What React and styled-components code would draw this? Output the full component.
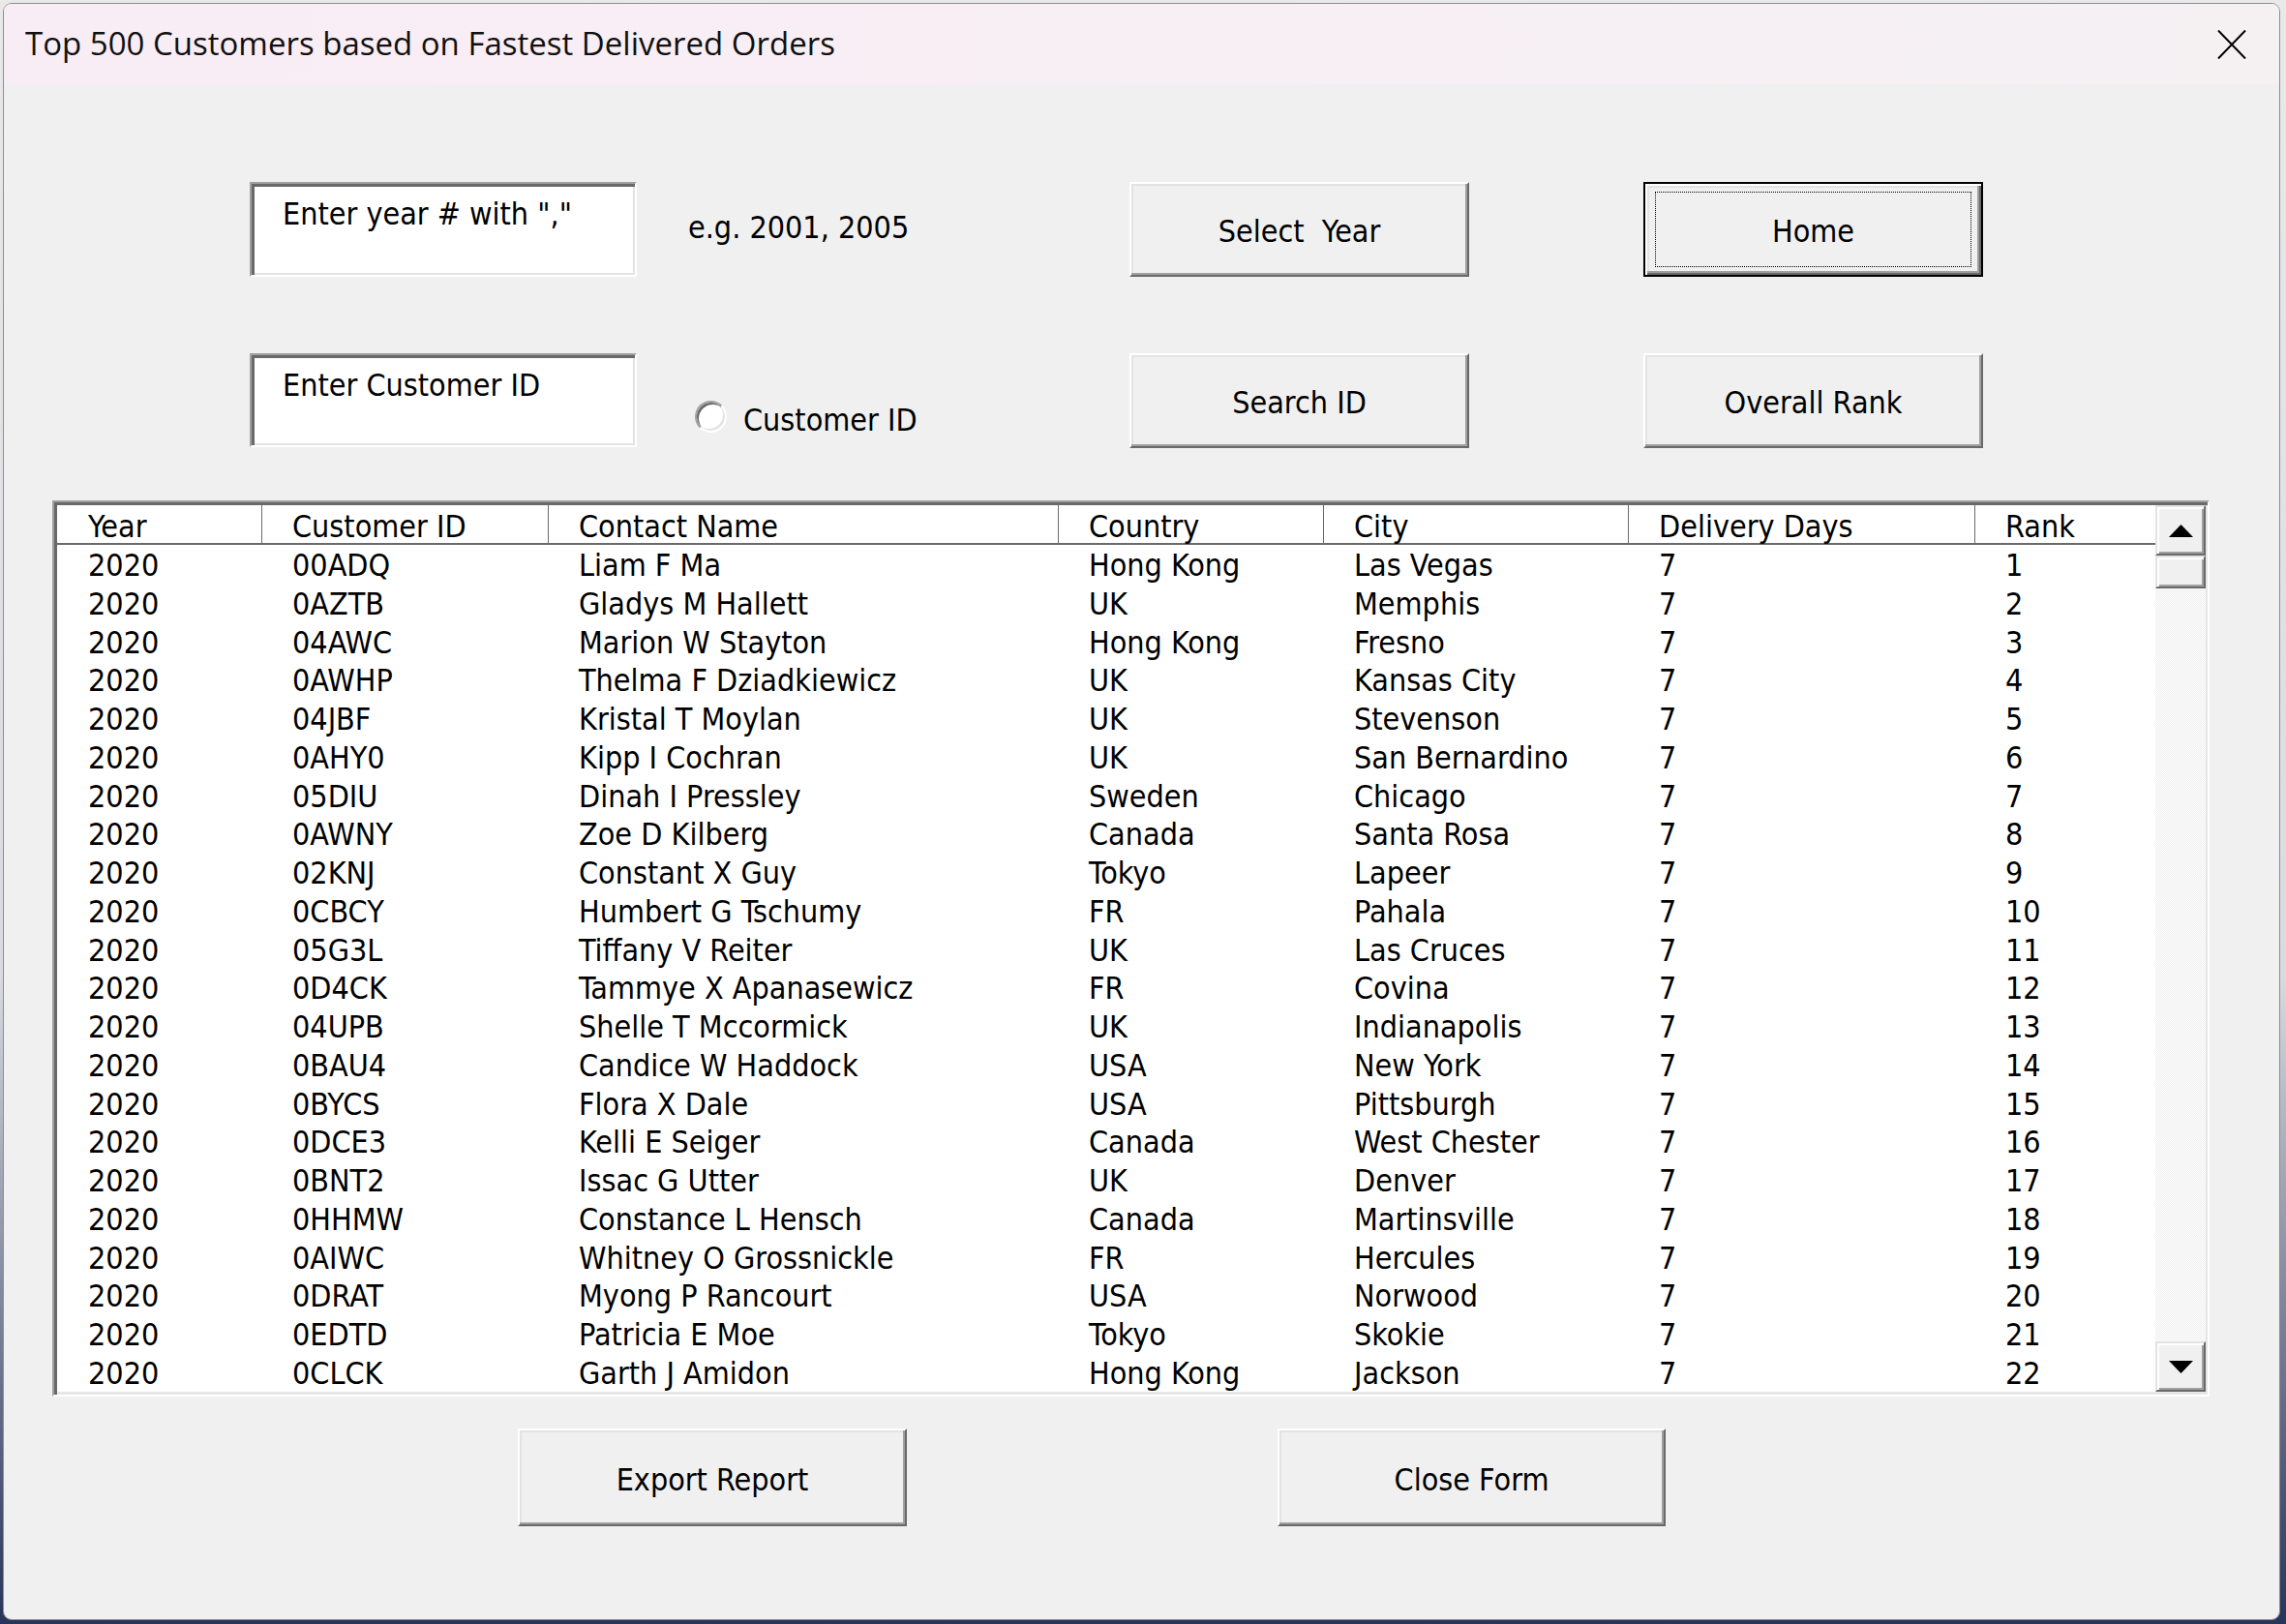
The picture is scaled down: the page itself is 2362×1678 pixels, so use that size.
import React from "react";
import styled, { createGlobalStyle, css } from "styled-components";

const GlobalStyle = createGlobalStyle`
  html, body { margin: 0; padding: 0; }
  body {
    width: 2362px;
    height: 1678px;
    overflow: hidden;
    background: linear-gradient(180deg, #e9e9e9 0%, #d9dbe0 60%, #27345a 100%);
  }
  #root { padding: 3px 0 0 3px; }
`;

const FORM_FONT = `"DejaVu Sans Condensed", "DejaVu Sans", sans-serif`;

const COLS = "212px 296px 527px 274px 315px 358px 1fr";

const Window = styled.div`
  box-sizing: border-box;
  width: 2353px;
  height: 1671px;
  border: 1px solid #8e8e8e;
  border-radius: 9px;
  background: #f0f0f0;
  overflow: hidden;
  display: flex;
  flex-direction: column;
`;

const TitleBar = styled.div`
  flex: none;
  height: 83px;
  display: flex;
  align-items: center;
  justify-content: space-between;
  padding: 0 34px 0 22px;
  background: linear-gradient(90deg, #f9edf5 0%, #f7eff4 60%, #f5f1f3 100%);
  font-family: "Open Sans", "Noto Sans", sans-serif;
  font-size: 33px;
  color: #111;
`;

const TitleText = styled.span`
  margin-top: -2px;
`;

const CloseGlyph = styled.svg`
  width: 30px;
  height: 30px;
  display: block;
`;

const FormBody = styled.div`
  flex: 1;
  padding-top: 101px;
  font-family: ${FORM_FONT};
  font-size: 32px;
  color: #000;
`;

const Controls = styled.div`
  display: grid;
  grid-template-columns: 400px 509px 351px 180px 351px;
  grid-template-rows: 98px 97px;
  row-gap: 79px;
  margin-left: 254px;
`;

const TextBox = styled.div`
  box-sizing: border-box;
  border: 2px solid;
  border-color: #a0a0a0 #ffffff #ffffff #a0a0a0;
  box-shadow: inset 3px 3px 0 #696969, inset -2px -2px 0 #e3e3e3;
  background: #fff;
  padding: 13px 0 0 32px;
  line-height: 37px;
  white-space: pre;
`;

const HintLabel = styled.div`
  align-self: start;
  margin-top: 29px;
  padding-left: 53px;
  line-height: 37px;
  white-space: pre;
`;

const RadioGroup = styled.label`
  align-self: start;
  margin-top: 51px;
  padding-left: 60px;
  display: flex;
  align-items: flex-start;
  gap: 17px;
  line-height: 37px;
`;

const RadioCircle = styled.span`
  box-sizing: border-box;
  flex: none;
  width: 33px;
  height: 33px;
  margin-top: -2px;
  border-radius: 50%;
  border: 2px solid;
  border-color: #a0a0a0 #ffffff #ffffff #a0a0a0;
  box-shadow: inset 2px 2px 0 #696969, inset -2px -2px 0 #e3e3e3;
  background: #fff;
`;

const Button = styled.button`
  box-sizing: border-box;
  width: ${(p) => p.$w || 351}px;
  height: ${(p) => p.$h || 98}px;
  margin: 0;
  padding: 5px 0 0 0;
  font: inherit;
  line-height: 37px;
  color: #000;
  background: #f0f0f0;
  border: 2px solid;
  border-color: #ffffff #696969 #696969 #ffffff;
  box-shadow: inset -2px -2px 0 #a0a0a0, inset 2px 2px 0 #e3e3e3;
  display: flex;
  align-items: center;
  justify-content: center;
  white-space: pre;
  cursor: default;

  ${(p) =>
    p.$default &&
    css`
      border-color: #000;
      box-shadow: inset 2px 2px 0 #ffffff, inset -2px -2px 0 #696969,
        inset -4px -4px 0 #a0a0a0, inset 4px 4px 0 #e3e3e3;
      padding: 0;
      align-items: stretch;
    `}
`;

const FocusRing = styled.span`
  flex: 1;
  margin: 8px 10px;
  border: 1px dotted #000;
  display: flex;
  align-items: center;
  justify-content: center;
  padding-top: 4px;
`;

const ListBox = styled.div`
  box-sizing: border-box;
  margin: 55px 0 0 50px;
  width: 2229px;
  height: 926px;
  border: 2px solid;
  border-color: #a0a0a0 #ffffff #ffffff #a0a0a0;
  box-shadow: inset 3px 3px 0 #696969, inset -3px -3px 0 #e6e6e6;
  padding: 3px 2px 3px 3px;
  display: flex;
  background: #fff;
`;

const TableArea = styled.div`
  flex: 1;
  min-width: 0;
  display: flex;
  flex-direction: column;
  background: #fff;
  overflow: hidden;
`;

const HeaderRow = styled.div`
  flex: none;
  display: grid;
  grid-template-columns: ${COLS};
  height: 39px;
  border-bottom: 2px solid #6b6b6b;
`;

const HeaderCell = styled.div`
  box-sizing: border-box;
  padding: 5px 0 0 ${(p) => (p.$first ? 32 : 31)}px;
  line-height: 35px;
  white-space: nowrap;
  border-right: ${(p) => (p.$last ? "none" : "1px solid #6b6b6b")};
`;

const RowsArea = styled.div`
  flex: 1;
  padding-top: 2px;
  overflow: hidden;
`;

const DataRow = styled.div`
  display: grid;
  grid-template-columns: ${COLS};
  height: 39.75px;
  line-height: 39.75px;
`;

const DataCell = styled.div`
  padding-left: ${(p) => (p.$first ? 32 : 31)}px;
  white-space: nowrap;
`;

const ScrollBar = styled.div`
  flex: none;
  width: 52px;
  display: flex;
  flex-direction: column;
`;

const ScrollButton = styled.div`
  box-sizing: border-box;
  flex: none;
  height: ${(p) => p.$h}px;
  border: 2px solid;
  border-color: #e3e3e3 #696969 #696969 #e3e3e3;
  box-shadow: inset 2px 2px 0 #ffffff, inset -2px -2px 0 #a0a0a0;
  background: #f0f0f0;
  display: flex;
  align-items: center;
  justify-content: center;
`;

const Track = styled.div`
  flex: 1;
  background: repeating-conic-gradient(#ffffff 0 25%, #ededed 0 50%) 0 0 / 2px 2px;
`;

const Footer = styled.div`
  display: flex;
  gap: 383px;
  margin: 33px 0 0 531px;
`;

const Arrow = ({ up }) => (
  <svg width="25" height="13" viewBox="0 0 25 13">
    <polygon points={up ? "0,13 25,13 12.5,0" : "0,0 25,0 12.5,13"} fill="#000" />
  </svg>
);

const HEADERS = ["Year", "Customer ID", "Contact Name", "Country", "City", "Delivery Days", "Rank"];

const ROWS = [
  ["2020", "00ADQ", "Liam F Ma", "Hong Kong", "Las Vegas", "7", "1"],
  ["2020", "0AZTB", "Gladys M Hallett", "UK", "Memphis", "7", "2"],
  ["2020", "04AWC", "Marion W Stayton", "Hong Kong", "Fresno", "7", "3"],
  ["2020", "0AWHP", "Thelma F Dziadkiewicz", "UK", "Kansas City", "7", "4"],
  ["2020", "04JBF", "Kristal T Moylan", "UK", "Stevenson", "7", "5"],
  ["2020", "0AHY0", "Kipp I Cochran", "UK", "San Bernardino", "7", "6"],
  ["2020", "05DIU", "Dinah I Pressley", "Sweden", "Chicago", "7", "7"],
  ["2020", "0AWNY", "Zoe D Kilberg", "Canada", "Santa Rosa", "7", "8"],
  ["2020", "02KNJ", "Constant X Guy", "Tokyo", "Lapeer", "7", "9"],
  ["2020", "0CBCY", "Humbert G Tschumy", "FR", "Pahala", "7", "10"],
  ["2020", "05G3L", "Tiffany V Reiter", "UK", "Las Cruces", "7", "11"],
  ["2020", "0D4CK", "Tammye X Apanasewicz", "FR", "Covina", "7", "12"],
  ["2020", "04UPB", "Shelle T Mccormick", "UK", "Indianapolis", "7", "13"],
  ["2020", "0BAU4", "Candice W Haddock", "USA", "New York", "7", "14"],
  ["2020", "0BYCS", "Flora X Dale", "USA", "Pittsburgh", "7", "15"],
  ["2020", "0DCE3", "Kelli E Seiger", "Canada", "West Chester", "7", "16"],
  ["2020", "0BNT2", "Issac G Utter", "UK", "Denver", "7", "17"],
  ["2020", "0HHMW", "Constance L Hensch", "Canada", "Martinsville", "7", "18"],
  ["2020", "0AIWC", "Whitney O Grossnickle", "FR", "Hercules", "7", "19"],
  ["2020", "0DRAT", "Myong P Rancourt", "USA", "Norwood", "7", "20"],
  ["2020", "0EDTD", "Patricia E Moe", "Tokyo", "Skokie", "7", "21"],
  ["2020", "0CLCK", "Garth J Amidon", "Hong Kong", "Jackson", "7", "22"],
];

export default function App() {
  return (
    <>
      <GlobalStyle />
      <Window>
        <TitleBar>
          <TitleText>Top 500 Customers based on Fastest Delivered Orders</TitleText>
          <CloseGlyph viewBox="0 0 30 30">
            <path d="M1 0.5 L29 29.5 M29 0.5 L1 29.5" stroke="#000" strokeWidth="2" fill="none" />
          </CloseGlyph>
        </TitleBar>
        <FormBody>
          <Controls>
            <TextBox>Enter year # with ","</TextBox>
            <HintLabel>e.g. 2001, 2005</HintLabel>
            <Button>Select  Year</Button>
            <span />
            <Button $default>
              <FocusRing>Home</FocusRing>
            </Button>

            <TextBox>Enter Customer ID</TextBox>
            <RadioGroup>
              <RadioCircle />
              <span>Customer ID</span>
            </RadioGroup>
            <Button>Search ID</Button>
            <span />
            <Button>Overall Rank</Button>
          </Controls>

          <ListBox>
            <TableArea>
              <HeaderRow>
                {HEADERS.map((h, i) => (
                  <HeaderCell key={h} $first={i === 0} $last={i === HEADERS.length - 1}>
                    {h}
                  </HeaderCell>
                ))}
              </HeaderRow>
              <RowsArea>
                {ROWS.map((r) => (
                  <DataRow key={r[1]}>
                    {r.map((c, i) => (
                      <DataCell key={i} $first={i === 0}>
                        {c}
                      </DataCell>
                    ))}
                  </DataRow>
                ))}
              </RowsArea>
            </TableArea>
            <ScrollBar>
              <ScrollButton $h={52}>
                <Arrow up />
              </ScrollButton>
              <ScrollButton $h={34} />
              <Track />
              <ScrollButton $h={52}>
                <Arrow />
              </ScrollButton>
            </ScrollBar>
          </ListBox>

          <Footer>
            <Button $w={402} $h={101}>Export Report</Button>
            <Button $w={401} $h={101}>Close Form</Button>
          </Footer>
        </FormBody>
      </Window>
    </>
  );
}
